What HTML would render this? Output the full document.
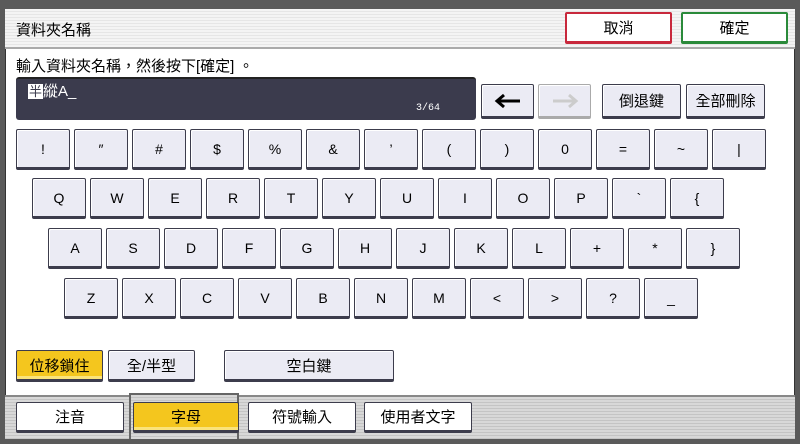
<!DOCTYPE html>
<html><head><meta charset="utf-8"><style>
*{margin:0;padding:0;box-sizing:border-box}
body{width:800px;height:444px;background:#5a5a5a;position:relative;overflow:hidden;font-family:"Liberation Sans","Noto Sans CJK TC",sans-serif;color:#000}
#win{position:absolute;left:5px;top:9px;width:790px;height:430px;background:#fff;border:1px solid #333}
#title{position:absolute;left:5px;top:9px;width:790px;height:40px;background:repeating-linear-gradient(#f4f4f4 0 2px,#e6e6e6 2px 3px);border-bottom:2px solid #aaa}
.a{position:absolute}
.k{position:absolute;width:54px;height:41px;background:#ebebf4;border:1px solid #3c3c4c;border-bottom:3px solid #3c3c4c;border-radius:2px;box-shadow:inset 1px 1px 0 #fff;display:flex;align-items:center;justify-content:center;font-size:14px;font-family:"Liberation Sans",sans-serif}
.b{position:absolute;display:flex;align-items:center;justify-content:center;font-size:15px;background:#ebebf4;border:1px solid #3c3c4c;border-bottom:3px solid #3c3c4c;border-radius:2px;box-shadow:inset 1px 1px 0 #fff}
.y{background:#f4c61e;box-shadow:inset 0 -3px 0 #fae37a}
.w{background:#fff}
.g{background:repeating-linear-gradient(#d8d8d8 0 2px,#c4c4c4 2px 3px)}
</style></head><body>
<div id="win"></div>
<div id="title"></div>
<div class="a" style="left:16px;top:19px;font-size:15px">資料夾名稱</div>
<div class="b w" style="left:565px;top:12px;width:107px;height:32px;border:2px solid #c8283c;border-bottom:3px solid #c8283c">取消</div>
<div class="b w" style="left:681px;top:12px;width:107px;height:32px;border:2px solid #2a8a3a;border-bottom:3px solid #2a8a3a">確定</div>
<div class="a" style="left:16px;top:55px;font-size:15px">輸入資料夾名稱，然後按下[確定] 。</div>
<div class="a" style="left:16px;top:77px;width:460px;height:43px;background:#3b3b4d;border-radius:3px;border-top:2px solid #222"></div>
<div class="a" style="left:28px;top:80px;font-size:15px;color:#fff"><span style="background:#fff;color:#3b3b4d;font-size:13px;padding:0 1px">半</span>縱A_</div>
<div class="a" style="left:416px;top:103px;font-size:10px;color:#fff;font-family:'Liberation Mono',monospace">3/64</div>
<div class="b" style="left:481px;top:84px;width:53px;height:35px"><svg width="28" height="16" viewBox="0 0 28 16"><path d="M26 8H4M10 2L3 8l7 6" stroke="#000" stroke-width="3" fill="none"/></svg></div>
<div class="b" style="left:538px;top:84px;width:53px;height:35px;border-color:#aaa"><svg width="28" height="16" viewBox="0 0 28 16"><path d="M2 8h22M18 2l7 6-7 6" stroke="#ccc" stroke-width="3" fill="none"/></svg></div>
<div class="b" style="left:602px;top:84px;width:79px;height:35px">倒退鍵</div>
<div class="b" style="left:686px;top:84px;width:79px;height:35px">全部刪除</div>
<div id="keys"></div>
<div class="b y" style="left:16px;top:350px;width:87px;height:32px">位移鎖住</div>
<div class="b" style="left:108px;top:350px;width:87px;height:32px">全/半型</div>
<div class="b" style="left:224px;top:350px;width:170px;height:32px">空白鍵</div>
<div class="a g" style="left:5px;top:395px;width:790px;height:44px;border-top:2px solid #888"></div>
<div class="a g" style="left:129px;top:393px;width:110px;height:46px;border:2px solid #666;border-bottom:none"></div>
<div class="b w" style="left:16px;top:402px;width:108px;height:31px">注音</div>
<div class="b y" style="left:133px;top:402px;width:106px;height:31px">字母</div>
<div class="b w" style="left:248px;top:402px;width:108px;height:31px">符號輸入</div>
<div class="b w" style="left:364px;top:402px;width:108px;height:31px">使用者文字</div>
<script>
var rows=[["!","″","#","$","%","&amp;","’","(",")","0","=","~","|"],["Q","W","E","R","T","Y","U","I","O","P","`","{"],["A","S","D","F","G","H","J","K","L","+","*","}"],["Z","X","C","V","B","N","M","&lt;","&gt;","?","_"]];
var ys=[129,178,228,278],xs=[16,32,48,64],h="";
rows.forEach(function(r,i){r.forEach(function(c,j){h+='<div class="k" style="left:'+(xs[i]+58*j)+'px;top:'+ys[i]+'px">'+c+'</div>';});});
document.getElementById("keys").innerHTML=h;
</script>
</body></html>
